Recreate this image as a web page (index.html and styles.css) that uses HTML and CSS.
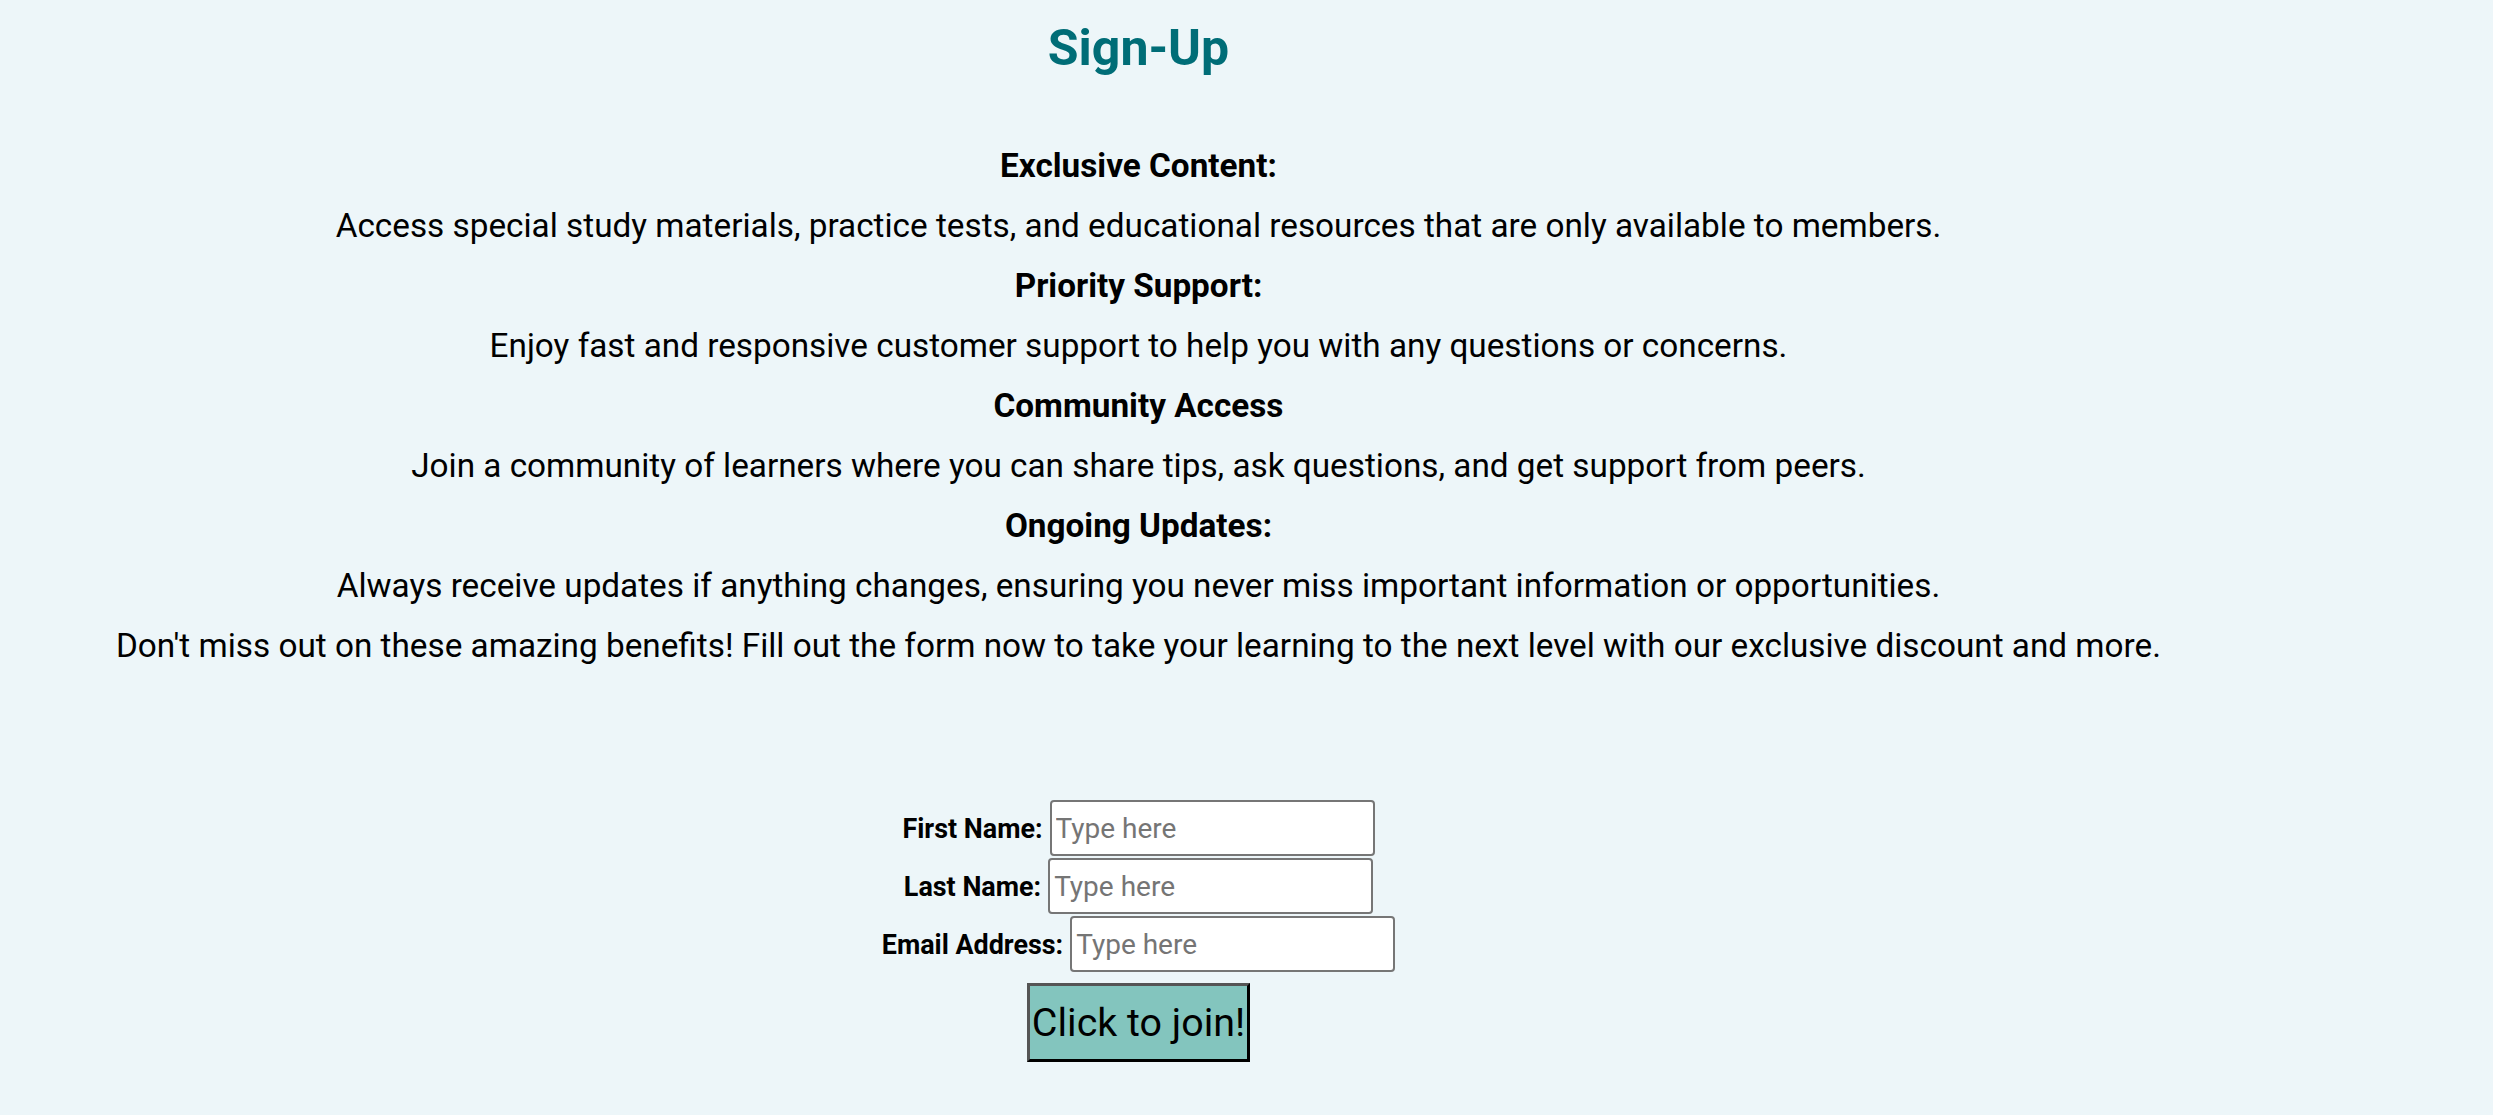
FILE: index.html
```html
<!DOCTYPE html>
<html lang="en">
<head>
<meta charset="utf-8">
<title>Sign-Up</title>
<link rel="stylesheet" href="styles.css">
</head>
<body>
<main class="page">
  <h1 class="title">Sign-Up</h1>
  <section class="benefits">
    <h3 class="benefit-title">Exclusive Content:</h3>
    <p class="benefit-text">Access special study materials, practice tests, and educational resources that are only available to members.</p>
    <h3 class="benefit-title">Priority Support:</h3>
    <p class="benefit-text">Enjoy fast and responsive customer support to help you with any questions or concerns.</p>
    <h3 class="benefit-title">Community Access</h3>
    <p class="benefit-text">Join a community of learners where you can share tips, ask questions, and get support from peers.</p>
    <h3 class="benefit-title">Ongoing Updates:</h3>
    <p class="benefit-text">Always receive updates if anything changes, ensuring you never miss important information or opportunities.</p>
    <p class="benefit-text">Don't miss out on these amazing benefits! Fill out the form now to take your learning to the next level with our exclusive discount and more.</p>
  </section>
  <form class="signup-form">
    <div class="form-row">
      <label class="form-label" for="first">First Name:</label>
      <input class="form-input" id="first" type="text" placeholder="Type here">
    </div>
    <div class="form-row">
      <label class="form-label" for="last">Last Name:</label>
      <input class="form-input" id="last" type="text" placeholder="Type here">
    </div>
    <div class="form-row">
      <label class="form-label" for="email">Email Address:</label>
      <input class="form-input" id="email" type="email" placeholder="Type here">
    </div>
    <button class="join-btn" type="button">Click to join!</button>
  </form>
</main>
</body>
</html>
```

FILE: styles.css
```css
html, body {
  margin: 0;
  padding: 0;
}

body {
  background: #edf6f9;
  font-family: Roboto, "Liberation Sans", sans-serif;
  color: #000;
}

.page {
  width: 2277px;
  text-align: center;
}

.title {
  margin: 19px 0 0;
  font-size: 50px;
  font-weight: 700;
  line-height: 59px;
  color: #006d77;
}

.benefits {
  margin-top: 58px;
}

.benefit-title,
.benefit-text {
  margin: 0;
  font-size: 33.3px;
  line-height: 60px;
  white-space: nowrap;
}

.benefit-title {
  font-weight: 700;
}

.benefit-text {
  font-weight: 400;
}

.signup-form {
  margin-top: 124px;
  display: flex;
  flex-direction: column;
  align-items: center;
  gap: 2px;
}

.form-row {
  display: flex;
  justify-content: center;
  align-items: baseline;
  gap: 7px;
}

.form-label {
  font-size: 26.9px;
  font-weight: 700;
}

.form-input {
  box-sizing: border-box;
  width: 325px;
  height: 56px;
  padding: 0 4px;
  border: 2px solid #767676;
  border-radius: 4px;
  background: #fff;
  font-family: Roboto, "Liberation Sans", sans-serif;
  font-size: 28px;
  color: #000;
}

.form-input::placeholder {
  color: #757575;
}

.join-btn {
  margin-top: 9px;
  box-sizing: border-box;
  height: 79px;
  padding: 0 2px;
  border-width: 3px;
  border-style: solid;
  border-color: #555 #000 #000 #555;
  background: #83c5be;
  font-family: Roboto, "Liberation Sans", sans-serif;
  font-size: 39.4px;
  color: #000;
}
```
